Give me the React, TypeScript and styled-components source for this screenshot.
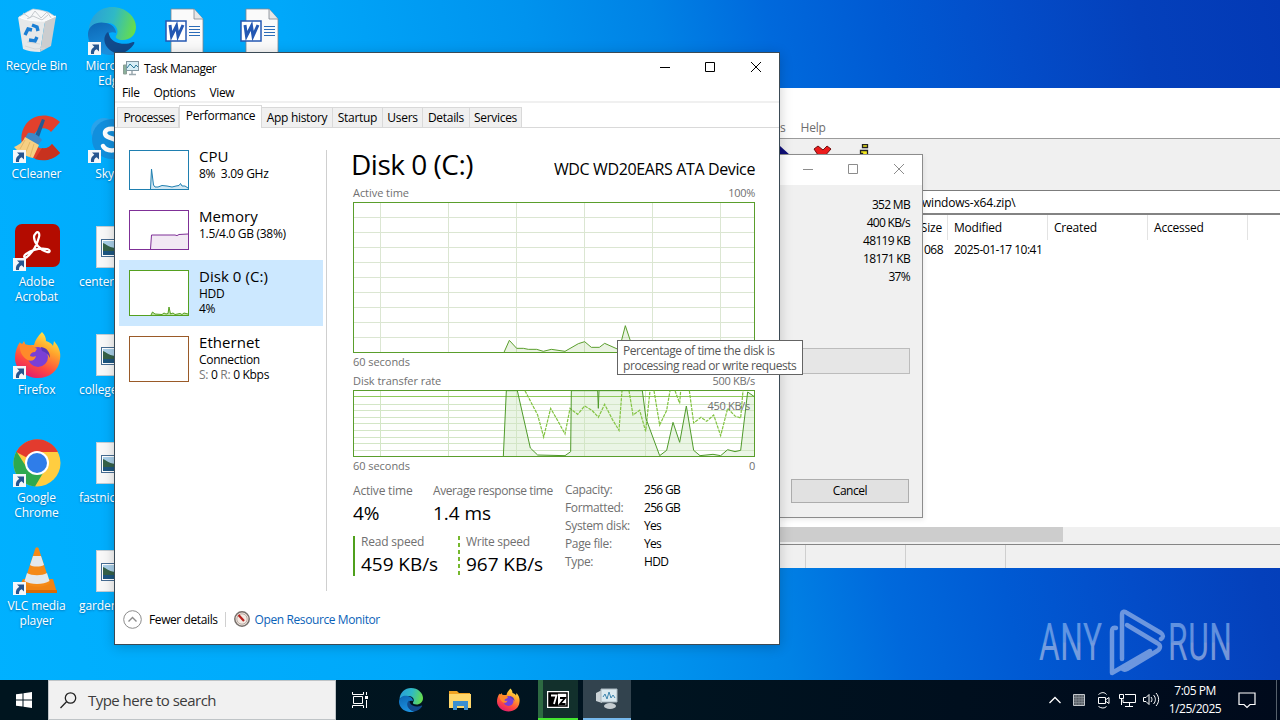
import React from 'react'
import styled, { createGlobalStyle, css } from 'styled-components'

const GlobalStyle = createGlobalStyle`
  * {
    box-sizing: border-box;
  }
  body {
    margin: 0;
    overflow: hidden;
    font-family: 'Open Sans', 'Noto Sans', sans-serif;
    font-size: 12px;
    line-height: 15px;
    letter-spacing: -0.2px;
    color: #000;
  }
  svg {
    display: block;
    flex: none;
  }
`

/* ---------- data ---------- */

type Resource = {
  name: string
  lines: React.ReactNode[]
  color: string
  height: number
  selected?: boolean
  line?: string
  fill?: string
}

const resources: Resource[] = [
  {
    name: 'CPU',
    lines: ['8%  3.09 GHz'],
    color: '#1f7fb0',
    height: 40,
    line: '21.5,39 22.5,19 24.5,35 26,37 29,37 33,35.5 38,36 43,37 47,36 50,35.5 51.5,33.5 53,36 56,36 59,38',
    fill: '#d3e8f3',
  },
  {
    name: 'Memory',
    lines: ['1.5/4.0 GB (38%)'],
    color: '#7f3097',
    height: 40,
    line: '21.5,39 22.5,25 46,25 48,25.6 50,24.5 59,24',
    fill: '#f2e9f4',
  },
  {
    name: 'Disk 0 (C:)',
    lines: ['HDD', '4%'],
    color: '#55a020',
    height: 46,
    selected: true,
    line: '22,45 23.5,42 26,44 33,44.5 35,43 37,44 39,43.5 40,37 41.5,44 44,43 46,44.5 51,43.5 53,44.5 55,43 59,44',
    fill: '#bfe0a6',
  },
  {
    name: 'Ethernet',
    lines: ['Connection', <><em>S:</em> 0 <em>R:</em> 0 Kbps</>],
    color: '#9a5a28',
    height: 46,
  },
]

const tabs = [
  { label: 'Processes', width: 62 },
  { label: 'Performance', width: 83, active: true },
  { label: 'App history', width: 71 },
  { label: 'Startup', width: 50 },
  { label: 'Users', width: 40 },
  { label: 'Details', width: 47 },
  { label: 'Services', width: 52 },
]

const diskInfo = [
  ['Capacity:', '256 GB'],
  ['Formatted:', '256 GB'],
  ['System disk:', 'Yes'],
  ['Page file:', 'Yes'],
  ['Type:', 'HDD'],
]

const activePoints =
  '492,637 508,601 530,625 550,625 565,628 590,628 610,634 634,628 675,634 715,611 734,605 754,622 778,622 794,610 832,627 838,627 856,557 872,605 890,630 1243,632'

const readPoints =
  '490,259 499,62 532,62 571,234 593,255 675,257 692,245 694,62 773,62 775,115 777,62 907,62 918,146 959,257 980,241 999,157 1019,217 1039,108 1061,241 1080,257 1119,253 1142,257 1163,239 1185,245 1202,241 1223,66 1243,80'

const writePaths = [
  'M555,62 L593,135 611,201 632,115 656,157 675,192 690,115 713,133 734,108 756,121 775,142 794,103 817,148 837,181 846,62',
  'M867,62 L879,135 899,121 917,184 930,62',
  'M942,62 L959,165 980,121 990,62',
  'M1005,62 L1019,100 1022,62',
  'M1048,62 L1061,159 1083,142 1100,154 1121,135 1142,197 1163,115 1185,138 1202,144 1209,62',
]

/* ---------- icons ---------- */

const EdgeIcon = ({ size, id }: { size: number; id: string }) => (
  <svg width={size} height={size} viewBox="0 0 48 48">
    <defs>
      <linearGradient id={`${id}a`} x1="0" y1="0.3" x2="1" y2="0.5">
        <stop offset="0" stopColor="#2a9fd8" />
        <stop offset="0.5" stopColor="#2fb9c6" />
        <stop offset="1" stopColor="#66dd4c" />
      </linearGradient>
      <linearGradient id={`${id}b`} x1="0" y1="0" x2="0.3" y2="1">
        <stop offset="0" stopColor="#0c66b4" />
        <stop offset="1" stopColor="#1c90de" />
      </linearGradient>
    </defs>
    <path d="M1 22C2 9 12 0 24 0c14 0 24 10 24 20 0 8-6 13-13 13-5 0-8-2-7-4 4-5 0-13-8-13C11 16 3 19 1 22z" fill={`url(#${id}a)`} />
    <path d="M0 26C1 18 9 14 18 16c6 1 10 5 10 10-8-3-12 4-9 11 2 5 6 9 12 10C14 52-1 40 0 26z" fill={`url(#${id}b)`} />
    <path d="M20 25c-7 5-4 19 11 22 6-1 12-5 15-10 1-2 0-2-1-2-9 4-20 1-23-5-1-2-1-4-2-5z" fill="#114a8c" />
  </svg>
)

const FirefoxIcon = ({ size, id }: { size: number; id: string }) => (
  <svg width={size} height={size} viewBox="0 0 48 48">
    <defs>
      <linearGradient id={`${id}f`} x1="0.8" y1="0" x2="0.3" y2="1">
        <stop offset="0" stopColor="#fff44f" />
        <stop offset="0.35" stopColor="#ffa52c" />
        <stop offset="0.7" stopColor="#ff4a40" />
        <stop offset="1" stopColor="#e01a70" />
      </linearGradient>
    </defs>
    <path d="M29 1c3 3 4 6 4 9 4 1 6 3 7 5l1-5c5 6 7 11 6 18-1 12-11 19-22 19S2 39 2 27c0-6 2-12 5-16l1 4 3-5 2 5c3-1 6-1 8-1 1-5 4-9 8-13z" fill={`url(#${id}f)`} />
    <circle cx="25" cy="26" r="10" fill="#7a3fd6" />
    <path d="M7 12c5 2 12 1 17 6l-2 3c-3 0-5 2-5 4 2 1 4 1 6 0-1 5-6 6-10 3C9 25 6 20 7 12z" fill="#ff8a2a" />
    <path d="M28 16c6 1 9 5 9 11-2-4-4-6-8-7z" fill="#5a36b8" />
  </svg>
)

const RecycleIcon = () => (
  <svg width="48" height="48" viewBox="0 0 48 48">
    <path d="M6 10l8-5 6-3 7 1 8 2 8 5-5 6H10z" fill="#f7f8f9" stroke="#c9cdd1" strokeWidth="0.7" />
    <path d="M10 6l7 5 5-7 6 7 6-6 5 7M14 12l6-3 9 4 6-5" stroke="#c5cace" fill="none" />
    <path d="M5 10l5 32c4 2 10 3 17 3l5-31C22 15 11 13 5 10z" fill="#e6e8e9" />
    <path d="M32 14l11-5-5 30-11 6z" fill="#cbcdcf" />
    <path d="M6 10c8 4 17 4 26 4l11-5" fill="none" stroke="#fff" />
    <path d="M12 28l3-6 4 1M19 18l5 2 1 4M24 30l-2 4-6-1" fill="none" stroke="#1b7fd4" strokeWidth="3.4" />
    <path d="M12 39l10 3 10-1M14 35l13 2" stroke="#d5d8da" fill="none" />
  </svg>
)

const CCleanerIcon = () => (
  <svg width="48" height="48" viewBox="0 0 48 48">
    <path d="M47 7C37-3 20-1 13 9 5 20 8 34 17 41c9 6 22 5 30-3l-8-9c-5 6-11 6-15 2-5-4-5-10-1-14 4-5 11-5 15 0z" fill="#e2402c" />
    <path d="M47 38l-8-9c-3 4-7 5-10 4l-7 11c9 3 18 1 25-6z" fill="#c8321f" />
    <path d="M29 4l3 1-7 20-4-2z" fill="#235b94" />
    <path d="M15 18c5-1 11 3 14 7l-4 5-13-7z" fill="#3e88c7" />
    <path d="M12 22l14 8-6 13C12 41 5 37 1 32c5-2 9-5 11-10z" fill="#f6cf83" />
    <path d="M12 25l-5 9M17 27l-5 12M21 29l-4 13" stroke="#e3b868" />
  </svg>
)

const AcrobatIcon = () => (
  <svg width="48" height="48" viewBox="0 0 48 48">
    <rect x="2" y="1" width="45" height="43" rx="7" fill="#b30b00" />
    <path d="M23 10c2-2 4 0 3 4-2 8-6 15-12 20-3 2-4-1-1-3 6-4 14-6 21-5 4 1 3 4 0 3-7-2-13-9-13-15 0-2 1-3 2-4z" fill="none" stroke="#fff" strokeWidth="2.2" />
  </svg>
)

const ChromeIcon = () => (
  <svg width="48" height="48" viewBox="0 0 48 48">
    <circle cx="24" cy="24" r="23.5" fill="#ffcd40" />
    <path d="M24 24L3.2 13.1A23.5 23.5 0 0 1 45 13H24z" fill="#e33b2e" />
    <path d="M3.5 12.5A23.5 23.5 0 0 0 22 47.4L33 29 14 29z" fill="#2da94f" />
    <circle cx="24" cy="24" r="12" fill="#fff" />
    <circle cx="24" cy="24" r="10" fill="#2f7de9" />
  </svg>
)

const VlcIcon = () => (
  <svg width="48" height="48" viewBox="0 0 48 48">
    <path d="M10 32h30l4 14H3z" fill="#f08313" />
    <path d="M3 43h41v3H3z" fill="#d96a05" />
    <path d="M22.500 1c1-1 2-1 3 0L37 36c-5 5-20 5-26 0z" fill="#f58a17" />
    <path d="M20 9h8l3 9c-4 2-11 2-14 0z" fill="#e4e8ea" />
    <path d="M14 26c5 3 15 3 20 0l2.500 8c-6 4-19 4-25 0z" fill="#e4e8ea" />
  </svg>
)

const SkypeIcon = () => (
  <svg width="48" height="48" viewBox="0 0 48 48">
    <circle cx="16" cy="16" r="13" fill="#2aa3ea" />
    <circle cx="32" cy="32" r="13" fill="#0a66c0" />
    <circle cx="24" cy="24" r="20" fill="#118fdd" />
    <path d="M32 17c-2-4-15-5-15 1 0 7 15 4 15 12 0 7-14 7-17 1" fill="none" stroke="#fff" strokeWidth="4.500" strokeLinecap="round" />
  </svg>
)

const WordIcon = () => (
  <svg width="48" height="48" viewBox="0 0 48 48">
    <path d="M8 2h23l9 10v38H8z" fill="#fafafa" stroke="#7d8791" strokeWidth="0.8" />
    <path d="M31 2v10h9" fill="#e6e6e6" stroke="#7d8791" strokeWidth="0.8" />
    <path d="M26 19.500h11M26 22.500h11M26 25.500h11M26 28.500h11" stroke="#2b6cb8" strokeWidth="1" />
    <rect x="3" y="14" width="20" height="20" fill="#fff" stroke="#2458b3" strokeWidth="1.5" />
    <path d="M7 18l1.500 11 5-10 1.500 10 5-11" fill="none" stroke="#2458b3" strokeWidth="3" />
  </svg>
)

const ImageFileIcon = () => (
  <svg width="48" height="48" viewBox="0 0 48 48">
    <rect x="8.500" y="3.500" width="31" height="41" fill="#f8f8f8" stroke="#c3cdd4" />
    <rect x="13.500" y="16.500" width="22" height="17" fill="#fff" stroke="#466c92" />
    <rect x="15" y="18" width="19" height="14" fill="#a9cfe8" />
    <path d="M15 20c3 1 5 4 12 5h7v4H15z" fill="#356148" />
    <path d="M15 28h19v4H15z" fill="#1d5680" />
  </svg>
)

const ShortcutArrow = () => (
  <svg width="13" height="13" viewBox="0 0 13 13">
    <rect width="13" height="13" fill="#f4f7fa" />
    <path d="M4 2.500h7v7L8.700 7.200C6.500 8 6 9.500 6 12H3C2.500 9 3.500 6.500 6.300 4.800z" fill="#26558f" />
  </svg>
)

const MonitorIcon = () => (
  <svg width="16" height="16" viewBox="0 0 16 16">
    <path d="M0.500 5h3v9h-3z" fill="#8ab09a" stroke="#8d9f95" />
    <rect x="3.500" y="1.500" width="12" height="9" fill="#d7eef6" stroke="#8298a3" />
    <path d="M4 8l3-4 4 4 2-3 2 2" fill="none" stroke="#2b7a9a" />
    <path d="M9 11v3M6 14.500h7" stroke="#9aa8ae" strokeWidth="1.500" />
  </svg>
)

const WindowButtons = ({ color }: { color: string }) => (
  <svg width="102" height="12" viewBox="0 0 102 12" fill="none" stroke={color}>
    <path d="M0 6.500h10M45.500 1.500h9v9h-9z" />
    <path d="M91 1l10 10M101 1l-10 10" />
  </svg>
)

/* ---------- desktop ---------- */

const Desktop = styled.div`
  position: relative;
  display: flex;
  flex-direction: column;
  justify-content: space-between;
  width: 1280px;
  height: 720px;
  overflow: hidden;
  background: linear-gradient(78deg, #00b1ff 0%, #00a8fa 30%, #0093ee 47%, #0082e5 56%, #0069dc 64%, #005ad3 72%, #034cc8 81%, #0440bb 90%, #0339b5 100%);
`

const IconColumns = styled.div`
  display: flex;
  margin-left: -1px;
`

const IconColumn = styled.div`
  display: flex;
  flex-direction: column;
  width: 75px;
`

const Shortcut = styled.div<{ $left?: boolean }>`
  height: 108px;
  padding: 7px 0 0;
  display: flex;
  flex-direction: column;
  align-items: center;
  gap: 3px;
  color: #fff;
  text-align: center;
  letter-spacing: -0.1px;
  text-shadow: 0 1px 2px rgba(0, 40, 90, 0.45);
  ${p => p.$left && css`
    > span {
      align-self: flex-start;
      padding-left: 5px;
    }
  `}
`

const ShortcutIcon = styled.div`
  position: relative;
`

const Overlay = styled.div`
  position: absolute;
  left: 0;
  bottom: 0;
`

const DesktopIcon: React.FC<{ icon: React.ReactNode; label: React.ReactNode; link?: boolean; left?: boolean }> = props => (
  <Shortcut $left={props.left}>
    <ShortcutIcon>
      {props.icon}
      {props.link && <Overlay><ShortcutArrow /></Overlay>}
    </ShortcutIcon>
    <span>{props.label}</span>
  </Shortcut>
)

const Watermark = styled.div`
  position: absolute;
  left: 1036px;
  top: 605px;
`

/* ---------- archive manager window ---------- */

const ArchiveWindow = styled.div`
  position: absolute;
  left: 780px;
  top: 88px;
  width: 500px;
  height: 480px;
  display: flex;
  flex-direction: column;
  background: #fff;
`

const ArchiveMenu = styled.div`
  height: 51px;
  display: flex;
  align-items: flex-end;
  gap: 15px;
  padding: 0 0 3px;
  border-bottom: 1px solid #9b9b9b;
  color: #6d6d6d;
`

const ArchiveToolbar = styled.div`
  height: 52px;
  padding: 5px 0 0;
  background: #f0f0f0;
  border-bottom: 1px solid #7c7c7c;
`

const AddressBar = styled.div`
  height: 24px;
  padding: 4px 0 0 142px;
  border-bottom: 2px solid #838383;
`

const FileGrid = styled.div<{ $head?: boolean }>`
  display: grid;
  grid-template-columns: 168px 100px 100px 100px 1fr;
  height: ${p => (p.$head ? 25 : 22)}px;
  line-height: ${p => (p.$head ? 25 : 20)}px;
  letter-spacing: ${p => (p.$head ? -0.2 : -0.5)}px;
  span {
    padding-left: 6px;
    border-right: ${p => (p.$head ? '1px solid #e3e3e3' : 'none')};
  }
  span:first-child {
    text-align: right;
    padding-right: 5px;
  }
  span:last-child {
    border: none;
  }
`

const ScrollTrack = styled.div`
  height: 17px;
  margin-top: auto;
  background: #f0f0f0;
`

const ScrollThumb = styled.div`
  width: 283px;
  height: 15px;
  background: #cdcdcd;
`

const StatusBar = styled.div`
  height: 24px;
  display: grid;
  grid-template-columns: 26px 100px 100px 1fr;
  background: #f0f0f0;
  border-top: 1px solid #858585;
  div {
    border-right: 1px solid #cfcfcf;
  }
`

const ProgressDialog = styled.div`
  position: absolute;
  left: 780px;
  top: 154px;
  width: 143px;
  height: 364px;
  display: flex;
  flex-direction: column;
  background: #f0f0f0;
  border: 1px solid #8c8c8c;
  border-left: none;
  box-shadow: 1px 2px 5px rgba(0, 0, 0, 0.08);
`

const DialogTitle = styled.div`
  height: 30px;
  padding: 8px 0 0 23px;
  background: #fff;
`

const DialogValues = styled.div`
  display: flex;
  flex-direction: column;
  padding: 11px 12px 0 0;
  text-align: right;
  line-height: 18px;
  letter-spacing: -0.7px;
`

const DialogProgress = styled.div`
  width: 130px;
  height: 26px;
  margin-top: 62px;
  background: #e6e6e6;
  border: 1px solid #bcbcbc;
`

const DialogButton = styled.div`
  width: 118px;
  height: 24px;
  margin: auto 0 14px 11px;
  border: 1px solid #adadad;
  background: #e1e1e1;
  text-align: center;
  line-height: 22px;
  letter-spacing: -0.45px;
`

/* ---------- task manager ---------- */

const TaskWindow = styled.div`
  position: absolute;
  left: 114px;
  top: 52px;
  width: 666px;
  height: 593px;
  display: flex;
  flex-direction: column;
  background: #fff;
  border: 1px solid #3b4a55;
  box-shadow: 0 2px 12px rgba(0, 0, 0, 0.2);
`

const TitleBar = styled.div`
  height: 30px;
  display: flex;
  align-items: center;
  gap: 5px;
  padding: 0 17px 0 8px;
  span {
    letter-spacing: -0.5px;
  }
  > svg:last-child {
    margin: 0 0 2px auto;
  }
`

const MenuBar = styled.div`
  height: 20px;
  display: flex;
  gap: 14px;
  padding: 2px 7px 0;
  border-bottom: 2px solid #f0f0f0;
  letter-spacing: -0.35px;
`

const TabStrip = styled.div`
  height: 25px;
  display: flex;
  align-items: flex-end;
  padding-left: 2px;
  border-bottom: 1px solid #d9d9d9;
`

const Tab = styled.div<{ $width: number; $active?: boolean }>`
  width: ${p => p.$width}px;
  height: ${p => (p.$active ? 23 : 20)}px;
  margin-bottom: ${p => (p.$active ? -1 : 0)}px;
  padding: 2px 0 0;
  background: ${p => (p.$active ? '#fff' : '#f0f0f0')};
  border: 1px solid #d9d9d9;
  border-bottom: none;
  border-left-width: ${p => (p.$active ? 1 : 0)}px;
  text-align: center;
  white-space: nowrap;
  letter-spacing: -0.3px;
  &:first-child {
    padding-left: 2px;
    border-left-width: 1px;
    letter-spacing: -0.5px;
  }
`

const Content = styled.div`
  flex: 1;
  display: flex;
`

const Sidebar = styled.div`
  width: 204px;
  margin-left: 4px;
  padding-top: 12px;
`

const ResourceItem = styled.div<{ $selected?: boolean; $height: number }>`
  display: flex;
  gap: 10px;
  height: ${p => p.$height + 20}px;
  padding: 10px;
  background: ${p => (p.$selected ? '#cce8ff' : 'transparent')};
`

const MiniChart = styled.div<{ $color: string; $height: number }>`
  width: 60px;
  height: ${p => p.$height}px;
  border: 1px solid ${p => p.$color};
  background: #fff;
  svg {
    margin: -1px;
  }
`

const ResourceText = styled.div`
  margin-top: -3px;
  white-space: pre;
  letter-spacing: -0.3px;
  em {
    font-style: normal;
    color: #777;
  }
  h3 {
    margin: 0;
    font-size: 15px;
    font-weight: 400;
    line-height: 19px;
    letter-spacing: 0.05px;
  }
`

const Divider = styled.div`
  width: 1px;
  height: 441px;
  margin: 22px 26px 0 3px;
  background: #cfcfcf;
`

const Detail = styled.div`
  width: 402px;
  padding-top: 20px;
`

const DetailHeader = styled.div`
  height: 36px;
  display: flex;
  justify-content: space-between;
  align-items: baseline;
  line-height: 32px;
  h1 {
    margin: 0 0 0 -2px;
    font-size: 28px;
    font-weight: 400;
    letter-spacing: -0.5px;
  }
  span {
    font-size: 16px;
    letter-spacing: -0.37px;
  }
`

const ChartLabels = styled.div<{ $height: number; $line?: number }>`
  height: ${p => p.$height}px;
  line-height: ${p => p.$line || p.$height}px;
  display: flex;
  justify-content: space-between;
  color: #707070;
  font-size: 11px;
  letter-spacing: -0.05px;
  span + span {
    letter-spacing: -0.3px;
  }
`

const Chart = styled.div<{ $height: number }>`
  position: relative;
  height: ${p => p.$height}px;
  border: 1px solid #5a9e2c;
  svg {
    margin: -1px;
  }
`

const ScaleLabel = styled.span`
  position: absolute;
  right: 4px;
  top: 7px;
  font-size: 11px;
  letter-spacing: -0.3px;
  color: #707070;
`

const Stats = styled.div`
  display: grid;
  grid-template-columns: 212px 79px 1fr;
  align-items: start;
  margin-top: 8px;
`

const StatGrid = styled.div`
  display: grid;
  grid-template-columns: 80px 1fr;
  row-gap: 9px;
`

const Speeds = styled.div`
  grid-column: 1 / 3;
  display: grid;
  grid-template-columns: 105px 1fr;
`

const Stat = styled.div<{ $bar?: 'solid' | 'dashed' }>`
  height: 42px;
  color: #707070;
  white-space: nowrap;
  letter-spacing: ${p => (p.$bar ? -0.3 : -0.4)}px;
  ${p => p.$bar && css`
    height: 43px;
    padding-left: 8px;
    background: ${p.$bar === 'solid'
      ? 'linear-gradient(#4fa01c, #4fa01c)'
      : 'repeating-linear-gradient(#76b82e 0 4px, transparent 4px 7px)'} no-repeat 0 2px / 2px 40px;
  `}
  b {
    display: block;
    margin-top: 2px;
    font-size: 19px;
    font-weight: 400;
    line-height: 26px;
    letter-spacing: -0.05px;
    color: #000;
  }
  &:first-child {
    letter-spacing: -0.2px;
  }
`

const InfoList = styled.div<{ $muted?: boolean }>`
  line-height: 18px;
  margin-top: -2px;
  color: ${p => (p.$muted ? '#707070' : '#000')};
  letter-spacing: ${p => (p.$muted ? -0.35 : -0.7)}px;
`

const Footer = styled.div`
  height: 50px;
  display: flex;
  align-items: center;
  padding: 0 0 0 8px;
  letter-spacing: -0.4px;
  a {
    margin-left: 5px;
    color: #0b62b8;
  }
`

const FooterLabel = styled.span`
  margin-left: 7px;
  padding-right: 7px;
  margin-right: 8px;
  border-right: 1px solid #d0d0d0;
`

const Tooltip = styled.div`
  position: absolute;
  left: 617px;
  top: 340px;
  width: 186px;
  height: 35px;
  padding: 2px 5px;
  background: #fff;
  border: 1px solid #646464;
  color: #575757;
  white-space: nowrap;
  letter-spacing: -0.43px;
`

/* ---------- taskbar ---------- */

const Taskbar = styled.div`
  height: 40px;
  display: flex;
  background: linear-gradient(90deg, #00151f, #001420 50%, #000a1c);
  color: #fff;
`

const TaskButton = styled.div<{ $width?: number; $tone?: 'green' | 'blue' }>`
  width: ${p => p.$width || 49}px;
  display: flex;
  align-items: center;
  justify-content: center;
  ${p => p.$tone === 'green' && css`
    background: linear-gradient(90deg, #2d6a42 0 5px, #12302c 5px);
    border-bottom: 2px solid #45e62f;
  `}
  ${p => p.$tone === 'blue' && css`
    margin-left: 5px;
    background: #32434e;
    border-bottom: 2px solid #76b9ed;
  `}
`

const SearchBox = styled.div`
  width: 288px;
  display: flex;
  align-items: center;
  gap: 11px;
  padding-left: 11px;
  background: #f1f1f1;
  border: 1px solid #bfc4c7;
  color: #3c3c3c;
  font-size: 15px;
  letter-spacing: -0.53px;
`

const Tray = styled.div`
  margin-left: auto;
  display: flex;
  align-items: center;
`

const Clock = styled.div`
  width: 66px;
  text-align: center;
  line-height: 18px;
  letter-spacing: -0.5px;
  margin-right: 10px;
`

const ShowDesktop = styled.div`
  width: 4px;
  height: 40px;
  margin-left: 20px;
  border-left: 1px solid #56606b;
`

const ResourceChart: React.FC<{ item: Resource }> = ({ item }) => (
  <MiniChart $color={item.color} $height={item.height}>
    {item.line && (
      <svg width="60" height={item.height}>
        <polygon points={`${item.line} 59,${item.height - 1} 21,${item.height - 1}`} fill={item.fill} />
        <polyline points={item.line} fill="none" stroke={item.color} />
        <path d={`M0 ${item.height - 0.5}H60M59.5 0V${item.height}`} stroke={item.color} />
      </svg>
    )}
  </MiniChart>
)

const ActiveTimeChart = () => (
  <Chart $height={151}>
    <svg width="402" height="151" viewBox="39 186 1206 453" fill="none">
      <g stroke="#dbe6d2" strokeWidth="3">
        {[121.5, 325.5, 529.5, 733.5, 937.5, 1141.5].map(x => <path key={x} d={`M${x} 189V636`} />)}
        {[1, 2, 3, 4, 5, 6, 7, 8, 9].map(i => <path key={i} d={`M42 ${187.5 + i * 45}H1242`} />)}
      </g>
      <polygon points={`${activePoints} 1243,637`} fill="#5aa020" fillOpacity="0.13" />
      <polyline points={activePoints} stroke="#5a9e2c" strokeWidth="3" />
    </svg>
  </Chart>
)

const TransferChart = () => (
  <Chart $height={67}>
    <svg width="402" height="67" viewBox="39 60 1206 201" fill="none">
      <polygon points={`${readPoints} 1243,259`} fill="#4fb02a" fillOpacity="0.12" />
      <g stroke="#d3e6c6" strokeWidth="3">
        {[121.5, 325.5, 529.5, 733.5, 916.5].map(x => <path key={x} d={`M${x} 63V258`} />)}
        {[103.5, 121.5, 142.5, 160.5, 181.5, 202.5, 220.5, 241.5].map(y => <path key={y} d={`M42 ${y}H1242`} />)}
      </g>
      <path d="M42 79.500H1242" stroke="#8fca5c" strokeWidth="3" />
      {writePaths.map(d => <path key={d} d={d} stroke="#82c341" strokeWidth="3.600" strokeDasharray="10 3" />)}
      <polyline points={readPoints} stroke="#4f9a2a" strokeWidth="3" />
    </svg>
    <ScaleLabel>450 KB/s</ScaleLabel>
  </Chart>
)

const TaskManager = () => (
  <TaskWindow>
    <TitleBar>
      <MonitorIcon />
      <span>Task Manager</span>
      <WindowButtons color="#000" />
    </TitleBar>
    <MenuBar>
      <span>File</span>
      <span>Options</span>
      <span>View</span>
    </MenuBar>
    <TabStrip>
      {tabs.map(t => <Tab key={t.label} $width={t.width} $active={t.active}>{t.label}</Tab>)}
    </TabStrip>
    <Content>
      <Sidebar>
        {resources.map(r => (
          <ResourceItem key={r.name} $selected={r.selected} $height={r.height}>
            <ResourceChart item={r} />
            <ResourceText>
              <h3>{r.name}</h3>
              {r.lines.map((l, i) => <div key={i}>{l}</div>)}
            </ResourceText>
          </ResourceItem>
        ))}
      </Sidebar>
      <Divider />
      <Detail>
        <DetailHeader>
          <h1>Disk 0 (C:)</h1>
          <span>WDC WD20EARS ATA Device</span>
        </DetailHeader>
        <ChartLabels $height={18}><span>Active time</span><span>100%</span></ChartLabels>
        <ActiveTimeChart />
        <ChartLabels $height={19} $line={18}><span>60 seconds</span></ChartLabels>
        <ChartLabels $height={18}><span>Disk transfer rate</span><span>500 KB/s</span></ChartLabels>
        <TransferChart />
        <ChartLabels $height={18}><span>60 seconds</span><span>0</span></ChartLabels>
        <Stats>
          <StatGrid>
            <Stat>Active time<b>4%</b></Stat>
            <Stat>Average response time<b>1.4 ms</b></Stat>
            <Speeds>
              <Stat $bar="solid">Read speed<b>459 KB/s</b></Stat>
              <Stat $bar="dashed">Write speed<b>967 KB/s</b></Stat>
            </Speeds>
          </StatGrid>
          <InfoList $muted>{diskInfo.map(d => <div key={d[0]}>{d[0]}</div>)}</InfoList>
          <InfoList>{diskInfo.map(d => <div key={d[0]}>{d[1]}</div>)}</InfoList>
        </Stats>
      </Detail>
    </Content>
    <Footer>
      <svg width="19" height="19" viewBox="0 0 19 19" fill="none" stroke="#8b8b8b">
        <circle cx="9.500" cy="9.500" r="8.800" />
        <path d="M5.500 11.500l4-4 4 4" strokeWidth="1.400" />
      </svg>
      <FooterLabel>Fewer details</FooterLabel>
      <svg width="16" height="16" viewBox="0 0 16 16">
        <circle cx="8" cy="8" r="7.200" fill="#f3e9e2" stroke="#77706c" strokeWidth="1.500" />
        <circle cx="8" cy="8" r="5.200" fill="none" stroke="#b8aaa2" />
        <path d="M4.500 4l5.500 6" stroke="#b8201c" strokeWidth="2.200" />
      </svg>
      <a>Open Resource Monitor</a>
    </Footer>
  </TaskWindow>
)

const ArchiveManager = () => (
  <>
    <ArchiveWindow>
      <ArchiveMenu><span>s</span><span>Help</span></ArchiveMenu>
      <ArchiveToolbar>
        <svg width="100" height="26" viewBox="0 0 100 26">
          <path d="M0 2l10 9H0z" fill="#10107a" />
          <path d="M34 5l4-3 5 4 4-4 4 3-8 9 7 8H35l5-8z" fill="#ec1c1c" stroke="#701010" />
          <path d="M82.500 0.500h5v3h-5zM80.500 6.500h7v15h-5v-12h-2z" fill="#f5ea1e" stroke="#222" strokeWidth="1.300" />
        </svg>
      </ArchiveToolbar>
      <AddressBar>windows-x64.zip\</AddressBar>
      <FileGrid $head><span>Size</span><span>Modified</span><span>Created</span><span>Accessed</span><span /></FileGrid>
      <FileGrid><span>068</span><span>2025-01-17 10:41</span></FileGrid>
      <ScrollTrack><ScrollThumb /></ScrollTrack>
      <StatusBar><div /><div /><div /></StatusBar>
    </ArchiveWindow>
    <ProgressDialog>
      <DialogTitle><WindowButtons color="#8c8c8c" /></DialogTitle>
      <DialogValues>
        <span>352 MB</span>
        <span>400 KB/s</span>
        <span>48119 KB</span>
        <span>18171 KB</span>
        <span>37%</span>
      </DialogValues>
      <DialogProgress />
      <DialogButton>Cancel</DialogButton>
    </ProgressDialog>
  </>
)

const AnyRunLogo = () => (
  <Watermark>
    <svg width="240" height="74" viewBox="0 0 240 74" opacity="0.6">
      <defs>
        <linearGradient id="wm" x1="0" y1="0" x2="0" y2="1">
          <stop offset="0" stopColor="#9cc4f5" />
          <stop offset="0.5" stopColor="#9fc0f0" />
          <stop offset="0.52" stopColor="#c3cde8" />
          <stop offset="1" stopColor="#bac8ea" />
        </linearGradient>
      </defs>
      <g fill="url(#wm)" fontFamily="Roboto" fontSize="52" fontWeight="400" letterSpacing="1">
        <text transform="translate(3 54.500) scale(0.61 1)">ANY</text>
        <text transform="translate(132 54.500) scale(0.61 1)">RUN</text>
      </g>
      <g fill="none" stroke="#b3c8ee" strokeWidth="4.500" strokeLinejoin="round" strokeLinecap="round">
        <path d="M80 23c-4-1-4 2-4 4v41l38-22" />
        <path d="M86 54V10c0-4 3-4 5-2l34 20c3 2 2 5 0 6" />
        <path d="M91 20l30 18c4 2 4 5 0 8L91 64c-2 1-4 1-5-1" />
      </g>
    </svg>
  </Watermark>
)

const App: React.FC = () => (
  <>
    <GlobalStyle />
    <Desktop>
      <IconColumns>
        <IconColumn>
          <DesktopIcon icon={<RecycleIcon />} label="Recycle Bin" />
          <DesktopIcon icon={<CCleanerIcon />} label="CCleaner" link />
          <DesktopIcon icon={<AcrobatIcon />} label={<>Adobe<br />Acrobat</>} link />
          <DesktopIcon icon={<FirefoxIcon size={48} id="d" />} label="Firefox" link />
          <DesktopIcon icon={<ChromeIcon />} label={<>Google<br />Chrome</>} link />
          <DesktopIcon icon={<VlcIcon />} label={<>VLC media<br />player</>} link />
        </IconColumn>
        <IconColumn>
          <DesktopIcon icon={<EdgeIcon size={48} id="d" />} label={<>Microsoft<br />Edge</>} link />
          <DesktopIcon icon={<SkypeIcon />} label="Skype" link />
          <DesktopIcon icon={<ImageFileIcon />} label="centers" left />
          <DesktopIcon icon={<ImageFileIcon />} label="college" left />
          <DesktopIcon icon={<ImageFileIcon />} label="fastnic" left />
          <DesktopIcon icon={<ImageFileIcon />} label="garden" left />
        </IconColumn>
        <IconColumn><DesktopIcon icon={<WordIcon />} label="" /></IconColumn>
        <IconColumn><DesktopIcon icon={<WordIcon />} label="" /></IconColumn>
      </IconColumns>
      <AnyRunLogo />
      <ArchiveManager />
      <TaskManager />
      <Tooltip>Percentage of time the disk is<br />processing read or write requests</Tooltip>
      <Taskbar>
        <TaskButton $width={48}>
          <svg width="16" height="16" viewBox="0 0 16 16" fill="#fff">
            <path d="M0 2.300L6.500 1.400V7.500H0zM7.500 1.200L16 0v7.500H7.500zM0 8.500h6.500v6.100L0 13.700zM7.500 8.500H16V16l-8.500-1.200z" />
          </svg>
        </TaskButton>
        <SearchBox>
          <svg width="17" height="17" viewBox="0 0 17 17" fill="none" stroke="#222" strokeWidth="1.300">
            <circle cx="10.500" cy="6" r="5.200" />
            <path d="M6.500 9.800L0.500 16" />
          </svg>
          Type here to search
        </SearchBox>
        <TaskButton $width={48}>
          <svg width="17" height="16" viewBox="0 0 17 16" fill="none" stroke="#fff">
            <path d="M1.500 4.500h9v7h-9zM0.500 0v2.500h11V0M0.500 16v-2.500h11V16M14.500 0v3M14.500 8v8" />
            <path d="M13 4h3v3h-3z" fill="#fff" stroke="none" />
          </svg>
        </TaskButton>
        <TaskButton $width={54}><EdgeIcon size={24} id="t" /></TaskButton>
        <TaskButton $width={44}>
          <svg width="22" height="20" viewBox="0 0 22 20">
            <path d="M0 1h8l2 2h11v5H0z" fill="#f0a322" />
            <path d="M0 4h22v14H0z" fill="#ffd76b" />
            <path d="M4 11h15v9h-4v-4H8v4H4z" fill="#3c8fd0" />
          </svg>
        </TaskButton>
        <TaskButton $width={52}><FirefoxIcon size={24} id="t" /></TaskButton>
        <TaskButton $width={4} />
        <TaskButton $width={40} $tone="green">
          <svg width="22" height="17" viewBox="0 0 22 17">
            <rect width="22" height="17" fill="#fff" />
            <rect x="2" y="2" width="18" height="13" fill="#fff" stroke="#000" strokeWidth="1.500" />
            <rect x="2" y="2" width="9" height="13" />
            <path d="M4 4.500h5.500L7 13" fill="none" stroke="#fff" strokeWidth="1.800" />
            <path d="M13 7h5l-5 6h5.500" fill="none" stroke="#000" strokeWidth="1.800" />
          </svg>
        </TaskButton>
        <TaskButton $width={48} $tone="blue">
          <svg width="24" height="22" viewBox="0 0 24 22">
            <path d="M1 5l6-3v13l-6-2z" fill="#c9d2d6" />
            <path d="M6 1h16v13H6z" fill="#dbe9ef" stroke="#a9b7be" />
            <path d="M8 9l2-3 2 5 2-7 2 6 2-3 2 3" fill="none" stroke="#3d85ae" />
            <ellipse cx="15" cy="18" rx="6" ry="3" fill="#c5cdd1" />
          </svg>
        </TaskButton>
        <Tray>
          <svg width="113" height="20" viewBox="0 0 113 20" fill="none" stroke="#fff">
            <path d="M0.500 13l5.500-5.500 5.500 5.500" strokeWidth="1.300" />
            <path d="M24.500 4.500h11v11h-11z" fill="#565d64" stroke="#c4c8cc" />
            <path d="M27 5v10M30 5v10M33 5v10M25 7.500h10M25 10h10M25 12.500h10" stroke="#8a9096" strokeWidth="0.700" />
            <path d="M49.500 7.500h7v6h-7zM57 9.500l3-2v6l-3-2M49.500 4.500c3-2.500 6-2.500 8 0M49.500 16.500c3 2 6 2 8 0" />
            <path d="M76 4.500h10.500v8H74v-3M80.500 12.500v4M76 16.500h8M70.500 4.500h4v4h-4zM72.500 9v6" />
            <path d="M94.500 7.500h2.500l3-3v10l-3-3h-2.500zM102 7c1.300 1.500 1.300 3.500 0 5M104.500 5c2.500 2.500 2.500 6.500 0 9M107 3c3.500 4 3.500 9 0 13" />
          </svg>
          <Clock>7:05 PM<br />1/25/2025</Clock>
          <svg width="18" height="18" viewBox="0 0 18 18" fill="none" stroke="#fff" strokeWidth="1.200">
            <path d="M1 2h16v11.500h-5L9 16.500l-3-3H1z" />
          </svg>
          <ShowDesktop />
        </Tray>
      </Taskbar>
    </Desktop>
  </>
)

export default App
